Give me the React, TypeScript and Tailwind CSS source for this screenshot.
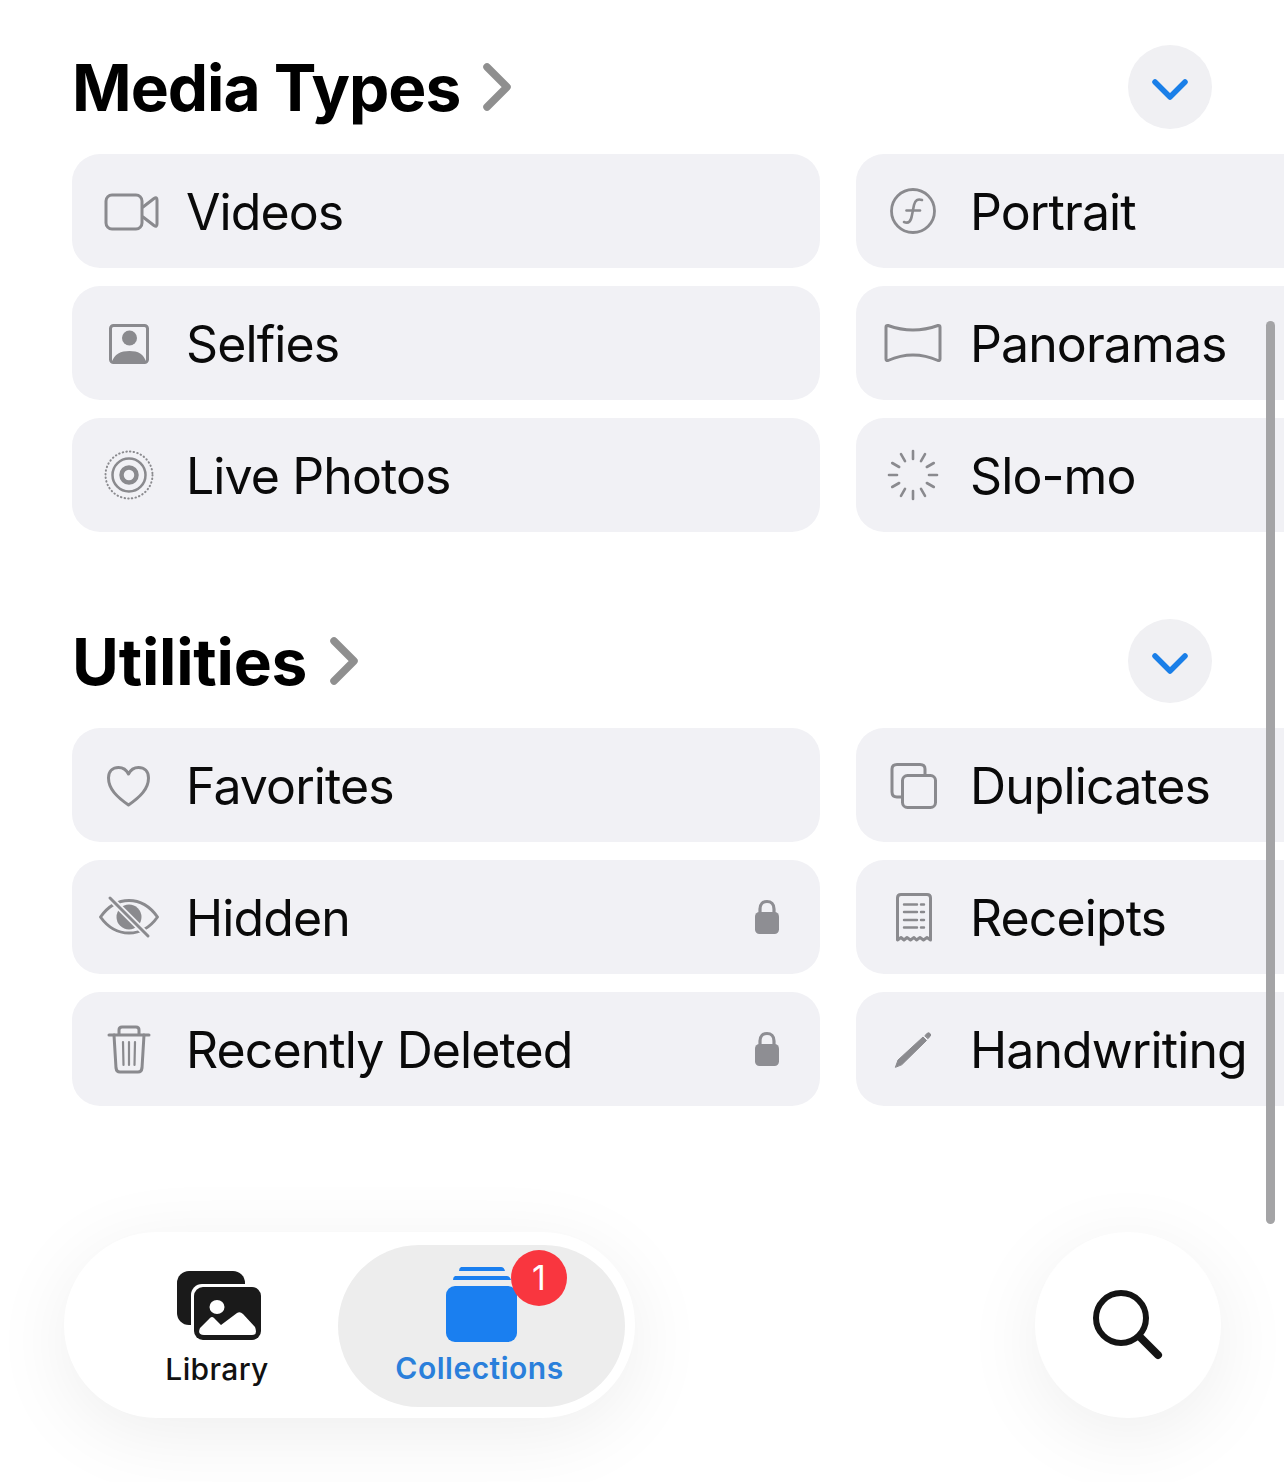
import type { ReactNode } from 'react';

const GRAY = '#8a8a8e';

function Icon({ children }: { children: ReactNode }) {
  return (
    <svg width="64" height="64" viewBox="0 0 64 64" fill="none" stroke={GRAY} strokeWidth="3" strokeLinecap="round" strokeLinejoin="round" className="shrink-0">
      {children}
    </svg>
  );
}

const VideoIcon = () => (
  <Icon>
    <rect x="9" y="16" width="36" height="34" rx="6" />
    <path d="M46 28 L57 19.5 Q60 17.5 60 21 V45 Q60 48.5 57 46.5 L46 38" />
  </Icon>
);

const SelfieIcon = () => (
  <Icon>
    <rect x="13.5" y="14.5" width="37" height="37" rx="3" />
    <circle cx="32.5" cy="27" r="7.5" fill={GRAY} stroke="none" />
    <path d="M15 51 C17 43 24 40 32.5 40 C41 40 47 43 49 51 Z" fill={GRAY} stroke="none" />
  </Icon>
);

const LiveIcon = () => (
  <Icon>
    <circle cx="32" cy="32" r="23.5" strokeWidth="2" strokeDasharray="0.5 3.2" />
    <circle cx="32" cy="32" r="16.5" strokeWidth="2.5" />
    <circle cx="32" cy="32" r="7.5" strokeWidth="4.5" />
  </Icon>
);

const PortraitIcon = () => (
  <Icon>
    <circle cx="32" cy="32" r="21.5" strokeWidth="2.8" />
    <path d="M23 43 C28 45 30 42 31 36 L33 26 C34 21 37 19.5 41 21" strokeWidth="2.6" />
    <path d="M25.5 31.5 H39" strokeWidth="2.6" />
  </Icon>
);

const PanoIcon = () => (
  <Icon>
    <path d="M5 16 Q5 14 7 14.5 Q32 23.5 57 14.5 Q59 14 59 16 V48 Q59 50 57 49.5 Q32 38.5 7 49.5 Q5 50 5 48 Z" />
  </Icon>
);

const SLOMO_ANGLES = [0, 30, 60, 90, 120, 150, 180, 210, 240, 270, 300, 330];

const SlomoIcon = () => (
  <Icon>
    {SLOMO_ANGLES.map(a => (
      <line key={a} x1="32" y1="8" x2="32" y2="16" strokeWidth="2.6" transform={`rotate(${a} 32 32)`} />
    ))}
  </Icon>
);

const HeartIcon = () => (
  <Icon>
    <path d="M31.5 52 C20 44 11.5 36 11.5 25 C11.5 18 16 14.5 21.5 14.5 C26 14.5 29.5 17 31.5 21 C33.5 17 37 14.5 41.5 14.5 C47 14.5 51.5 18 51.5 25 C51.5 36 43 44 31.5 52 Z" />
  </Icon>
);

const HiddenIcon = () => (
  <Icon>
    <path d="M3.5 32 C12 20 22 15.5 32 15.5 C42 15.5 52 20 60.5 32 C52 44 42 48 32 48 C22 48 12 44 3.5 32 Z" />
    <circle cx="32" cy="32" r="12.5" fill={GRAY} stroke="none" />
    <path d="M13 13 L51 51" stroke="#f1f1f5" strokeWidth="6.5" strokeLinecap="butt" />
    <path d="M13 13 L51 51" strokeWidth="3" />
  </Icon>
);

const TrashIcon = () => (
  <Icon>
    <path d="M12 18 H52" />
    <path d="M22 17 V13 Q22 10 25 10 H39 Q42 10 42 13 V17" />
    <path d="M17 18 L19 51 Q19.5 55 23 55 H41 Q44.5 55 45 51 L47 18" />
    <path d="M26 25 L26.5 48 M32 25 V48 M38 25 L37.5 48" strokeWidth="2.2" />
  </Icon>
);

const DuplicatesIcon = () => (
  <Icon>
    <rect x="21.5" y="22.5" width="33" height="32" rx="5" />
    <path d="M44 21 V16 Q44 11.5 39 11.5 H16 Q11 11.5 11 16 V39 Q11 44 16 44 H20" />
  </Icon>
);

const ReceiptIcon = () => (
  <Icon>
    <path d="M16.5 55 V13 Q16.5 9.5 20 9.5 H46 Q49.5 9.5 49.5 13 V55 L46 52.5 L42.5 55 L39 52.5 L35.5 55 L33 52.5 L29.5 55 L26 52.5 L23 55 L20 52.5 Z" />
    <path d="M23 19.5 H36 M23 27 H36 M23 35 H36 M23 42.5 H36" strokeWidth="2.4" />
    <path d="M40 19.5 H43 M40 27 H43 M40 35 H43 M40 42.5 H43" strokeWidth="2.4" />
  </Icon>
);

const PencilIcon = () => (
  <Icon>
    <path d="M14.5 50 L17 43 L42 20 L45.5 23.5 L21 47.5 Z" fill={GRAY} strokeWidth="1" />
    <path d="M44 18.5 L46 16.5 Q47.5 15 49 16.5 Q50.5 18 49 19.5 L47 21.5 Z" fill={GRAY} strokeWidth="1" />
  </Icon>
);

const Lock = () => (
  <svg width="26" height="36" viewBox="0 0 26 36" fill="none" className="shrink-0">
    <path d="M6 15 V10 C6 5 9 2.5 13 2.5 C17 2.5 20 5 20 10 V15" stroke="#8e8e93" strokeWidth="3.2" />
    <rect x="1" y="13" width="24" height="22" rx="4.5" fill="#8e8e93" />
  </svg>
);

type Row = { label: string; icon: ReactNode; locked?: boolean };

function Card({ label, icon, locked }: Row) {
  return (
    <div className="flex h-[114px] items-center rounded-[28px] bg-[#f1f1f5] pl-[25px] pr-[40px]">
      {icon}
      <span className="ml-[25px] mt-[2px] flex-1 whitespace-nowrap text-[50px] leading-none tracking-[-0.9px] text-[#0a0a0a]">{label}</span>
      {locked && <Lock />}
    </div>
  );
}

function Section({ title, titleClass, rows }: { title: string; titleClass: string; rows: Row[] }) {
  return (
    <section>
      <div className="flex h-[84px] items-center justify-between pr-[72px]">
        <div className="flex items-center">
          <h2 className={`mt-[2px] text-[64px] font-bold leading-none text-black ${titleClass}`}>{title}</h2>
          <svg width="36" height="56" viewBox="0 0 36 56" fill="none" className="ml-[21px] shrink-0">
            <path d="M6 8 L26 28 L6 48" stroke="#8f8f8f" strokeWidth="7.5" strokeLinecap="round" strokeLinejoin="round" />
          </svg>
        </div>
        <div className="flex size-[84px] items-center justify-center rounded-full bg-[#f0f0f3]">
          <svg width="40" height="30" viewBox="0 0 40 30" fill="none">
            <path d="M5 10 L20 25 L35 10" stroke="#1a7fe8" strokeWidth="5.5" strokeLinecap="round" strokeLinejoin="round" />
          </svg>
        </div>
      </div>
      <div className="mt-[25px] grid grid-cols-[748px_748px] gap-x-[36px] gap-y-[18px]">
        {rows.map(row => (
          <Card key={row.label} {...row} />
        ))}
      </div>
    </section>
  );
}

const mediaTypes: Row[] = [
  { label: 'Videos', icon: <VideoIcon /> },
  { label: 'Portrait', icon: <PortraitIcon /> },
  { label: 'Selfies', icon: <SelfieIcon /> },
  { label: 'Panoramas', icon: <PanoIcon /> },
  { label: 'Live Photos', icon: <LiveIcon /> },
  { label: 'Slo-mo', icon: <SlomoIcon /> },
];

const utilities: Row[] = [
  { label: 'Favorites', icon: <HeartIcon /> },
  { label: 'Duplicates', icon: <DuplicatesIcon /> },
  { label: 'Hidden', icon: <HiddenIcon />, locked: true },
  { label: 'Receipts', icon: <ReceiptIcon /> },
  { label: 'Recently Deleted', icon: <TrashIcon />, locked: true },
  { label: 'Handwriting', icon: <PencilIcon /> },
];

function TabBar() {
  return (
    <div className="absolute bottom-[64px] left-[64px] right-[63px] flex items-start justify-between">
      <div className="flex h-[186px] w-[571px] items-center rounded-full bg-white pr-[10px] shadow-[0_16px_80px_rgba(0,0,0,0.07)]">
        <div className="flex w-[274px] flex-col items-center pl-[32px] pt-[6px]">
          <svg width="90" height="72" viewBox="0 0 90 72" className="mb-[9px] ml-[8px]">
            <rect x="1" y="0" width="68" height="54" rx="12" fill="#1a1a1a" />
            <rect x="15" y="13" width="73" height="59" rx="11" fill="#fff" />
            <rect x="18" y="16" width="67" height="53" rx="9" fill="#1a1a1a" />
            <ellipse cx="41" cy="36" rx="7.5" ry="7" fill="#fff" />
            <path d="M24 57 L34 47 Q36 45 38 47 L45 54 L61 42 Q64 40 67 43 L79 56 Q82 64 76 64 H28 Q21 64 24 57 Z" fill="#fff" />
          </svg>
          <span className="whitespace-nowrap text-[30px] font-medium leading-[34px] tracking-[0.35px] text-[#111]">Library</span>
        </div>
        <div className="relative mt-[2px] flex h-[162px] w-[287px] flex-col items-center rounded-full bg-[#ededed] pt-[21px]">
          <svg width="74" height="76" viewBox="0 0 74 76" className="mb-[9px]">
            <path d="M16 1 H56 Q59 1 60 5 H14 Q14 2 16 1 Z" fill="#1a7ff0" />
            <path d="M10 10 H62 Q65 10 66 14 H8 Q8 11 10 10 Z" fill="#1a7ff0" />
            <rect x="1" y="20" width="71" height="56" rx="9" fill="#1a7ff0" />
          </svg>
          <span className="mr-[4px] whitespace-nowrap text-[30px] font-semibold leading-[34px] tracking-[0.5px] text-[#2a7fdb]">Collections</span>
          <span className="absolute left-[173px] top-[5px] flex size-[56px] items-center justify-center rounded-full bg-[#f9363f] text-[34px] leading-none text-white">1</span>
        </div>
      </div>
      <div className="flex size-[186px] items-center justify-center rounded-full bg-white shadow-[0_16px_80px_rgba(0,0,0,0.07)]">
        <svg width="76" height="76" viewBox="0 0 76 76" fill="none" stroke="#141414" strokeLinecap="round">
          <circle cx="31" cy="31" r="25" strokeWidth="6" />
          <path d="M50 50 L68 68" strokeWidth="8" />
        </svg>
      </div>
    </div>
  );
}

export default function App() {
  return (
    <div className="relative h-[1482px] w-[1284px] overflow-hidden bg-white pl-[72px] pt-[45px] font-['Inter',sans-serif]">
      <div className="flex flex-col gap-[87px]">
        <Section title="Media Types" titleClass="tracking-[-1px]" rows={mediaTypes} />
        <Section title="Utilities" titleClass="tracking-[-0.2px]" rows={utilities} />
      </div>
      <div className="absolute left-[1266px] top-[321px] h-[903px] w-[9px] rounded-full bg-[#a4a4a6]" />
      <TabBar />
    </div>
  );
}
